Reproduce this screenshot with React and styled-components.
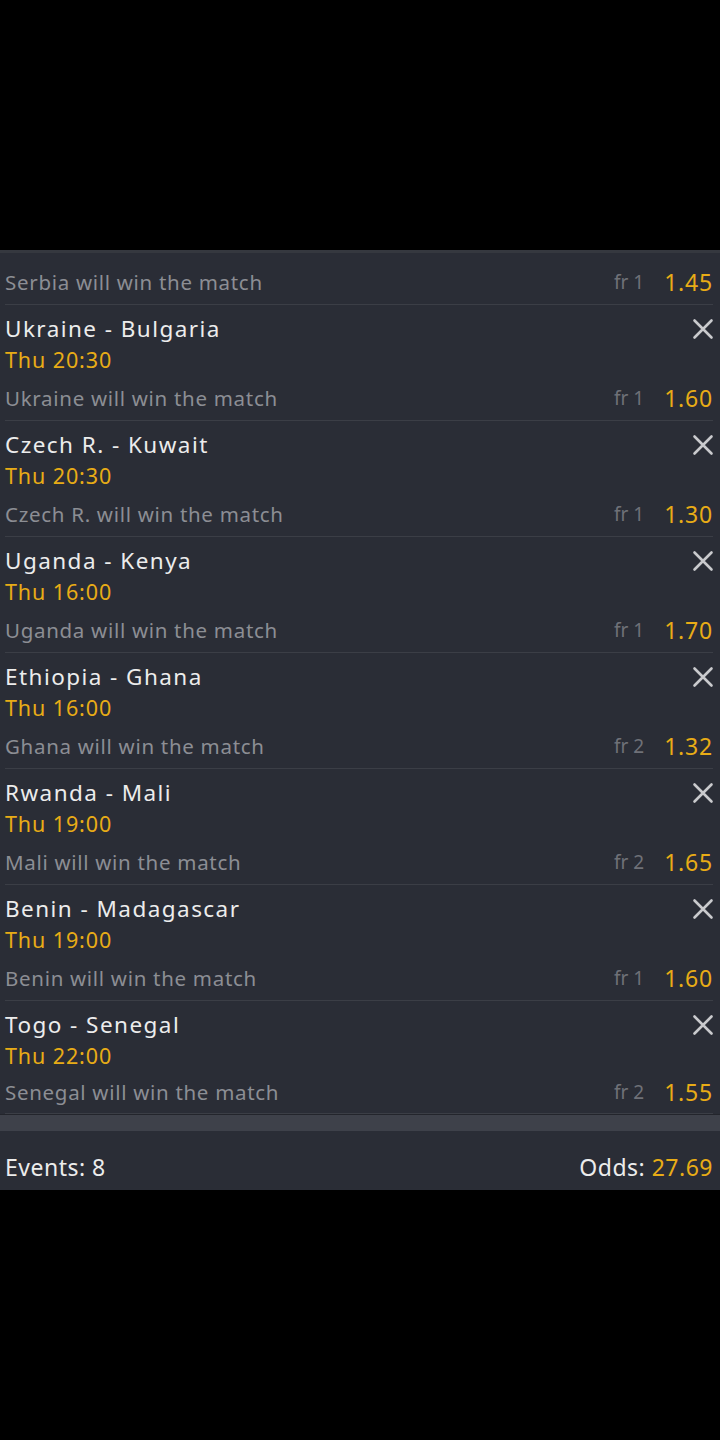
import styled, { createGlobalStyle } from "styled-components";

const GlobalStyle = createGlobalStyle`
  html, body {
    margin: 0;
    padding: 0;
    background: #000;
  }
  body {
    font-family: "Noto Sans", "Open Sans", sans-serif;
  }
`;

const bets = [
  { title: "Ukraine - Bulgaria", time: "Thu 20:30", pick: "Ukraine will win the match", fr: "fr 1", odds: "1.60" },
  { title: "Czech R. - Kuwait", time: "Thu 20:30", pick: "Czech R. will win the match", fr: "fr 1", odds: "1.30" },
  { title: "Uganda - Kenya", time: "Thu 16:00", pick: "Uganda will win the match", fr: "fr 1", odds: "1.70" },
  { title: "Ethiopia - Ghana", time: "Thu 16:00", pick: "Ghana will win the match", fr: "fr 2", odds: "1.32" },
  { title: "Rwanda - Mali", time: "Thu 19:00", pick: "Mali will win the match", fr: "fr 2", odds: "1.65" },
  { title: "Benin - Madagascar", time: "Thu 19:00", pick: "Benin will win the match", fr: "fr 1", odds: "1.60" },
  { title: "Togo - Senegal", time: "Thu 22:00", pick: "Senegal will win the match", fr: "fr 2", odds: "1.55" },
];

const CloseIcon = () => (
  <svg width="22" height="22" viewBox="0 0 22 22">
    <path d="M2.5 2.5 L19.5 19.5 M19.5 2.5 L2.5 19.5" stroke="#c9cacd" strokeWidth="2.6" strokeLinecap="round" />
  </svg>
);

const PickRow = ({ pick, fr, odds, last }) => (
  <PickLine $last={last}>
    <PickText>{pick}</PickText>
    <Fr>{fr}</Fr>
    <Odds>{odds}</Odds>
  </PickLine>
);

const Bet = ({ title, time, pick, fr, odds, last }) => (
  <Row>
    <TitleLine>
      <Title>{title}</Title>
      <CloseButton>
        <CloseIcon />
      </CloseButton>
    </TitleLine>
    <Time>{time}</Time>
    <PickRow pick={pick} fr={fr} odds={odds} last={last} />
  </Row>
);

export default function App() {
  return (
    <>
      <GlobalStyle />
      <Screen>
        <TopSpace />
        <Panel>
          <Row $first>
            <PickRow pick="Serbia will win the match" fr="fr 1" odds="1.45" />
          </Row>
          {bets.map((b, i) => (
            <Bet key={b.title} {...b} last={i === bets.length - 1} />
          ))}
          <Divider />
          <Footer>
            <FooterText>Events: 8</FooterText>
            <FooterText>
              Odds: <Gold>27.69</Gold>
            </FooterText>
          </Footer>
        </Panel>
      </Screen>
    </>
  );
}

const Screen = styled.div`
  width: 720px;
  min-height: 1440px;
  background: #000;
  display: flex;
  flex-direction: column;
`;

const TopSpace = styled.div`
  height: 250px;
`;

const Panel = styled.div`
  background: #2a2d36;
  border-top: 3px solid #35383f;
  display: flex;
  flex-direction: column;
`;

const Row = styled.div`
  margin: 0 7px 0 5px;
  padding-top: ${(p) => (p.$first ? "6px" : "7px")};
  border-bottom: 1px solid #3b3e46;
  display: flex;
  flex-direction: column;

  &:last-of-type {
    border-bottom: none;
  }
`;

const TitleLine = styled.div`
  display: flex;
  align-items: center;
  justify-content: space-between;
  height: 32px;
`;

const Title = styled.div`
  color: #ececec;
  font-size: 22.5px;
  letter-spacing: 1.45px;
`;

const CloseButton = styled.div`
  display: flex;
  align-items: center;
  margin-right: -1px;
  margin-top: 2px;
`;

const Time = styled.div`
  color: #e8ac16;
  font-size: 21.5px;
  letter-spacing: 0.9px;
  height: 31px;
  line-height: 31px;
`;

const PickLine = styled.div`
  display: flex;
  align-items: center;
  height: ${(p) => (p.$last ? "41px" : "45px")};
  padding-bottom: ${(p) => (p.$last ? "1px" : "0")};
`;

const PickText = styled.div`
  flex: 1;
  color: #8c8e94;
  font-size: 20.5px;
  letter-spacing: 0.7px;
`;

const Fr = styled.div`
  color: #6f7178;
  font-size: 19px;
  margin-right: 20px;
`;

const Odds = styled.div`
  color: #e8ac16;
  font-size: 23px;
  letter-spacing: 0.8px;
`;

const Divider = styled.div`
  height: 16px;
  background: #3e414a;
  border-top: 1px solid #23252c;
`;

const Footer = styled.div`
  height: 59px;
  padding: 12px 7px 0 5px;
  box-sizing: border-box;
  display: flex;
  align-items: center;
  justify-content: space-between;
`;

const FooterText = styled.div`
  color: #ececec;
  font-size: 23px;
  letter-spacing: 0.5px;
`;

const Gold = styled.span`
  color: #e8ac16;
`;
